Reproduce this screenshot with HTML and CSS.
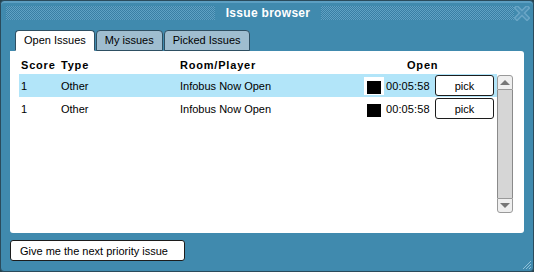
FILE: index.html
```html
<!DOCTYPE html>
<html lang="en">
<head>
    <meta charset="UTF-8">
    <title>Issue browser</title>
    <link rel="stylesheet" href="styles.css">
</head>
<body>
    <div class="window">
        <div class="titlebar">
            <div class="dots"></div>
            <div class="title">Issue browser</div>
            <div class="title-right">
                <div class="dots"></div>
                <svg class="close" width="16" height="15" viewBox="0 0 16 15">
                    <path d="M3 2 L13 12 M13 2 L3 12" stroke="#6aa6c6" stroke-width="5" stroke-linecap="square"/>
                    <path d="M3 2 L13 12 M13 2 L3 12" stroke="#4a8fb4" stroke-width="2" stroke-linecap="square"/>
                </svg>
            </div>
        </div>

        <div class="tabs">
            <div class="tab active">Open Issues</div>
            <div class="tab">My issues</div>
            <div class="tab">Picked Issues</div>
        </div>

        <div class="panel">
            <div class="list">
                <div class="row head">
                    <span>Score</span>
                    <span>Type</span>
                    <span>Room/Player</span>
                    <span></span>
                    <span class="open-col">Open</span>
                    <span></span>
                </div>
                <div class="row selected">
                    <span>1</span>
                    <span>Other</span>
                    <span>Infobus Now Open</span>
                    <span class="swatch"><i></i></span>
                    <span class="time">00:05:58</span>
                    <button class="pick">pick</button>
                </div>
                <div class="row">
                    <span>1</span>
                    <span>Other</span>
                    <span>Infobus Now Open</span>
                    <span class="swatch"><i></i></span>
                    <span class="time">00:05:58</span>
                    <button class="pick">pick</button>
                </div>
            </div>
            <div class="scrollbar">
                <div class="scroll-btn up"></div>
                <div class="scroll-track"></div>
                <div class="scroll-btn down"></div>
            </div>
        </div>

        <button class="next-btn">Give me the next priority issue</button>

        <svg class="resize" width="10" height="10" viewBox="0 0 10 10">
            <path d="M9 1 L1 9 M9 4 L4 9 M9 7 L7 9" stroke="#8fc0d8" stroke-width="1"/>
        </svg>
    </div>
</body>
</html>
```

FILE: styles.css
```css
body {
    margin: 0;
    background: #27434f;
    font-family: "Liberation Sans", Arial, sans-serif;
    font-size: 11px;
    color: #000;
}
.window {
    position: relative;
    width: 534px;
    height: 272px;
    box-sizing: border-box;
    border: 1px solid #2a4b5c;
    border-radius: 4px;
    background: #408aae;
    box-shadow: inset 0 2px 0 #5c9fc2;
    padding: 0 9px;
}
.titlebar {
    display: flex;
    align-items: center;
    height: 14px;
    margin: 5px -6px 0 -4px;
}
.dots {
    flex: 1;
    height: 14px;
    background: repeating-conic-gradient(#5fa2c4 0 25%, #3a7fa4 0 50%) 0 0 / 2px 2px;
}
.title {
    padding: 0 11px;
    color: #fff;
    font-weight: bold;
    font-size: 12px;
    letter-spacing: 0.3px;
}
.title-right {
    flex: 1;
    display: flex;
    align-items: center;
}
.close {
    display: block;
}
.tabs {
    display: flex;
    gap: 1px;
    margin: 10px 0 0 5px;
}
.tab {
    height: 19px;
    line-height: 19px;
    padding: 0 8px;
    background: #9fbdcf;
    border: 1px solid #2e4f62;
    border-radius: 4px 4px 0 0;
}
.tab.active {
    background: #fff;
    border-bottom-color: #fff;
}
.panel {
    display: flex;
    height: 182px;
    box-sizing: border-box;
    padding: 4px 11px 0 9px;
    background: #fff;
    border-radius: 0 3px 3px 3px;
}
.list {
    flex: 1;
}
.row {
    display: grid;
    grid-template-columns: 40px 119px 185px 21px 49px 59px;
    align-items: center;
    height: 23px;
    padding-left: 2px;
}
.row.head {
    height: 19px;
    font-weight: bold;
    letter-spacing: 0.8px;
}
.open-col {
    padding-left: 21px;
}
.row.selected {
    background: #b2e5f9;
}
.swatch {
    width: 20px;
    height: 18px;
    margin-left: -1px;
    box-sizing: border-box;
    padding: 4px 0 0 3px;
    background: #fff;
}
.swatch i {
    display: block;
    width: 14px;
    height: 13px;
    background: #000;
}
.time {
    letter-spacing: 0.1px;
}
.pick {
    height: 21px;
    box-sizing: border-box;
    background: #fff;
    border: 1px solid #1c1c1c;
    border-radius: 3px;
    font: inherit;
    padding: 0;
}
.scrollbar {
    width: 16px;
    display: flex;
    flex-direction: column;
    padding-top: 20px;
    padding-bottom: 20px;
}
.scroll-btn {
    height: 15px;
    box-sizing: border-box;
    background: #efefef;
    border: 1px solid #9a9a9a;
    display: flex;
    align-items: center;
    justify-content: center;
}
.scroll-btn.up {
    border-radius: 3px 3px 0 0;
}
.scroll-btn.down {
    border-radius: 0 0 3px 3px;
}
.scroll-btn.up::after {
    content: "";
    border: 5px solid transparent;
    border-bottom: 5px solid #777;
    border-top: 0;
}
.scroll-btn.down::after {
    content: "";
    border: 5px solid transparent;
    border-top: 5px solid #777;
    border-bottom: 0;
}
.scroll-track {
    flex: 1;
    background: #d6d6d6;
    border-left: 1px solid #8a8a8a;
    border-right: 1px solid #8a8a8a;
}
.next-btn {
    display: block;
    margin-top: 7px;
    height: 21px;
    width: 175px;
    box-sizing: border-box;
    padding: 0 0 0 9px;
    text-align: left;
    background: #fff;
    border: 1px solid #1c1c1c;
    border-radius: 3px;
    font: inherit;
}
.resize {
    position: absolute;
    right: 1px;
    bottom: 1px;
}
```
